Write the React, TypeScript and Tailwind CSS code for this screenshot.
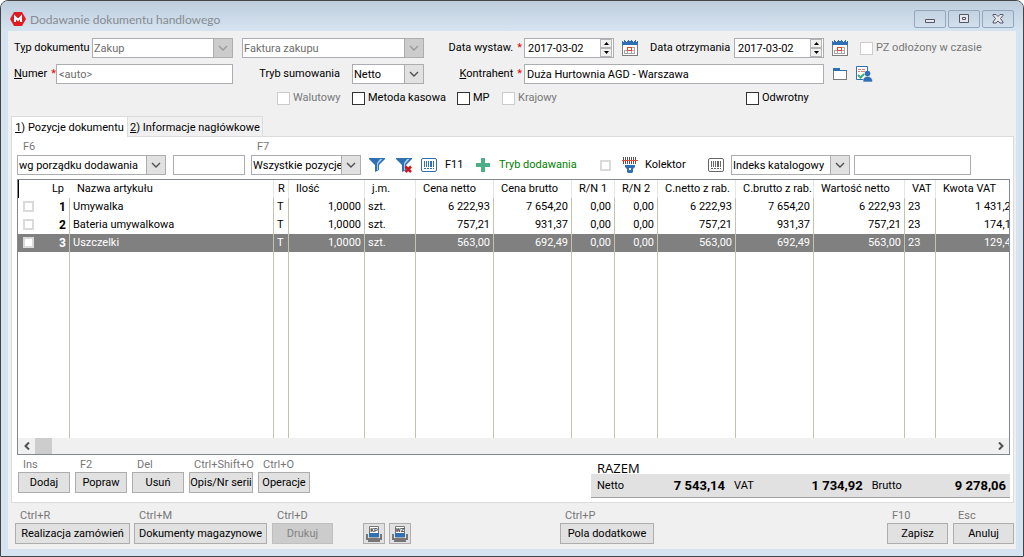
import type { ReactNode } from 'react';
import clsx from 'clsx';

const rows = [
  { lp: 1, name: 'Umywalka', net: '6 222,93', gross: '7 654,20', vat: '1 431,27' },
  { lp: 2, name: 'Bateria umywalkowa', net: '757,21', gross: '931,37', vat: '174,16' },
  { lp: 3, name: 'Uszczelki', net: '563,00', gross: '692,49', vat: '129,49', selected: true },
];

const headers = [
  'Nazwa artykułu',
  'R',
  'Ilość',
  'j.m.',
  'Cena netto',
  'Cena brutto',
  'R/N 1',
  'R/N 2',
  'C.netto z rab.',
  'C.brutto z rab.',
  'Wartość netto',
  'VAT',
  'Kwota VAT',
];

function Star() {
  return <span className="pl-1 text-[#e00000]">*</span>;
}

function Combo({
  label,
  value,
  className,
  disabled,
}: {
  label: string;
  value: string;
  className: string;
  disabled?: boolean;
}) {
  return (
    <div className={clsx('relative h-5 shrink-0', className)}>
      <select
        aria-label={label}
        disabled={disabled}
        className="block h-full w-full appearance-none border border-[#abadb3] bg-white pl-px pr-3 pt-0.5 text-black opacity-100 outline-none disabled:text-[#6d6d6d]"
      >
        <option>{value}</option>
      </select>
      <span
        className={clsx(
          'pointer-events-none absolute inset-y-0 right-0 flex w-5 items-center justify-center border border-[#adadad]',
          disabled ? 'bg-[#cccccc] text-[#9a9a9a]' : 'bg-[#e1e1e1] text-[#505050]',
        )}
      >
        <svg width="10" height="6" viewBox="0 0 10 6" fill="none" stroke="currentColor" strokeWidth="1.4">
          <path d="M1 1l4 4 4-4" />
        </svg>
      </span>
    </div>
  );
}

function TextBox({ label, value, className }: { label: string; value?: string; className: string }) {
  return (
    <input
      aria-label={label}
      defaultValue={value}
      className={clsx('h-5 shrink-0 border border-[#abadb3] bg-white px-0.5 outline-none', className)}
    />
  );
}

function DateBox({ id }: { id: string }) {
  return (
    <div className="flex h-5 w-[90px] shrink-0 border border-[#abadb3] bg-white">
      <input id={id} defaultValue="2017-03-02" className="min-w-0 flex-1 pl-[3px] pt-0.5 outline-none" />
      <div className="mr-px flex w-3 flex-col">
        {['M0 3h5L2.5 0z', 'M0 0h5L2.5 3z'].map((d, i) => (
          <button
            key={d}
            aria-label={i ? 'Dzień wstecz' : 'Dzień naprzód'}
            className="flex flex-1 items-center justify-center border border-[#b4b4b4] bg-[#f0f0f0]"
          >
            <svg width="5" height="3" viewBox="0 0 5 3">
              <path d={d} />
            </svg>
          </button>
        ))}
      </div>
    </div>
  );
}

function Check({ children, disabled, className }: { children: ReactNode; disabled?: boolean; className?: string }) {
  return (
    <label className={clsx('flex shrink-0 items-center gap-[3px]', disabled && 'text-[#777777]', className)}>
      <input
        type="checkbox"
        disabled={disabled}
        className="size-[13px] appearance-none border border-[#333333] bg-white disabled:border-[#cccccc]"
      />
      <span>{children}</span>
    </label>
  );
}

function KeyButton({
  hint,
  children,
  className,
  disabled,
}: {
  hint: string;
  children: ReactNode;
  className: string;
  disabled?: boolean;
}) {
  return (
    <div className={clsx('shrink-0', className)}>
      <div className="h-4 whitespace-nowrap pl-[5px] pt-px text-[#777777]">{hint}</div>
      <button
        disabled={disabled}
        className="h-[21px] w-full whitespace-nowrap border border-[#adadad] bg-[#e1e1e1] disabled:border-[#bfbfbf] disabled:bg-[#cccccc] disabled:text-[#838383]"
      >
        {children}
      </button>
    </div>
  );
}

function CalendarIcon() {
  return (
    <svg width="16" height="16" viewBox="0 0 16 16" shapeRendering="crispEdges">
      <path fill="#fff" d="M0 5h16v11H0z" />
      <path fill="#2f6fb3" d="M0 1h16v4H0zM2 0h1v1H2zM6 0h1v1H6zM9 0h1v1H9zM13 0h1v1h-1z" />
      <path fill="#f0f0f0" d="M1 1h1v1H1zM4 1h1v1H4zM11 1h1v1h-1zM14 1h1v1h-1z" />
      <path fill="none" stroke="#7d7d7d" d="M.5 5v10.500h15V5" />
      <path fill="none" stroke="#a8a8a8" d="M9.500 7.500h3v6h-10v-3h10M5.500 11v2M9.500 11v2" />
      <path fill="none" stroke="#d9492c" d="M5.500 7.500h4v3h-4z" />
    </svg>
  );
}

function FolderIcon() {
  return (
    <svg width="15" height="14" viewBox="0 0 15 14" shapeRendering="crispEdges">
      <path fill="#2f6fb3" d="M0 1h7v2h7v2H0z" />
      <path fill="#fff" stroke="#777" d="M.5 4v8.500h13V4" />
      <path fill="#2f6fb3" d="M0 3h14v1H0z" />
    </svg>
  );
}

function ContractorIcon() {
  return (
    <svg width="17" height="16" viewBox="0 0 17 16">
      <path fill="#fff" stroke="#2f6fb3" d="M.5.5h11v13H.5z" />
      <path stroke="#e08070" d="M2 3.500h3M6 3.500h3M2 5.500h2M5 5.500h4" />
      <path stroke="#3fa77c" strokeWidth="2" fill="none" d="M2 9l2.500 2.500L8 8" />
      <circle cx="11.500" cy="7.500" r="2.800" fill="#2f6fb3" />
      <path fill="#2f6fb3" stroke="#f0f0f0" strokeWidth=".6" d="M7 16c0-4 1.500-5.500 4.500-5.500S16.500 12 16.500 16z" />
    </svg>
  );
}

function FunnelIcon({ crossed }: { crossed?: boolean }) {
  return (
    <svg width="16" height="16" viewBox="0 0 16 16">
      <path fill="#2f6fb3" d="M0 1h16v1l-6 6v5l-4 2V8L0 2z" />
      <path fill="#a8cbe8" d="M11 2h2.500L9 7v6H8V6z" />
      {crossed && <path stroke="#d0141c" strokeWidth="2.500" d="M9.500 9.500l5.500 5.500M15 9.500L9.500 15" />}
    </svg>
  );
}

function BarcodeIcon({ color }: { color: string }) {
  return (
    <svg width="16" height="14" viewBox="0 0 16 14" fill="none" stroke={color}>
      <rect x=".5" y=".5" width="15" height="13" rx="1.500" fill="#fff" />
      <path shapeRendering="crispEdges" d="M3.500 3v6M5.500 3v6M7.500 3v6M9.500 3v6M10.500 3v6M12.500 3v6" />
      <path shapeRendering="crispEdges" strokeDasharray="2 1" d="M3 10.500h10" />
    </svg>
  );
}

function CollectorIcon() {
  return (
    <svg width="16" height="16" viewBox="0 0 16 16">
      <path
        stroke="#555"
        shapeRendering="crispEdges"
        d="M1.500 0v7M3.500 0v7M5.500 0v7M7.500 0v7M9.500 0v7M11.500 0v7M13.500 0v7"
      />
      <path fill="#e04a2f" d="M0 3h16v1H0z" />
      <path fill="#2f6fb3" d="M3 8h10v2l-2 2v3l-1 1H6l-1-1v-3L3 10z" />
      <path fill="#fff" d="M7 11h2v2H7z" />
    </svg>
  );
}

function TrayIcon({ text }: { text: string }) {
  return (
    <svg width="16" height="16" viewBox="0 0 16 16">
      <path fill="#777" d="M0 8h2v4h12V8h2v6h-2v2H2v-2H0z" />
      <path fill="#fff" stroke="#777" d="M3.500.5h9V11h-9z" />
      <path fill="#2f6fb3" d="M3 7h10v4H3z" />
      <text x="8" y="6" textAnchor="middle" fontSize="6" fontWeight="700" fill="#444">
        {text}
      </text>
    </svg>
  );
}

function Caption({ label, children }: { label: string; children: ReactNode }) {
  return (
    <button
      aria-label={label}
      className="flex h-[18px] w-8 items-center justify-center rounded-[2px] border border-[#93a6bd] bg-gradient-to-b from-[#c3d2e1] to-[#d3e0ed]"
    >
      <svg width="12" height="10" viewBox="0 0 12 10" fill="#e8e8ec" stroke="#55566a">
        {children}
      </svg>
    </button>
  );
}

function TitleBar() {
  return (
    <header className="flex h-[30px] shrink-0 items-start bg-gradient-to-b from-[#becddc] to-[#d6e4f2] px-[9px] pt-[9px]">
      <svg width="16" height="16" viewBox="0 0 16 16" className="mt-px">
        <path fill="#e01b24" d="M4 1h8l4 7-4 7H4L0 8z" />
        <path fill="none" stroke="#fff" strokeWidth="2" d="M5 11V6l3 3 3-3v5" />
      </svg>
      <h1 className="flex-1 pl-1 font-['Lato','Open_Sans',sans-serif] text-[12px] leading-5 text-[#868b91]">
        Dodawanie dokumentu handlowego
      </h1>
      <div className="flex gap-0.5">
        <Caption label="Minimalizuj">
          <path d="M1.500 5.500h9v3h-9z" />
        </Caption>
        <Caption label="Maksymalizuj">
          <path d="M1.500.5h9v8h-9zM4.500 3.500h3v2h-3z" />
        </Caption>
        <Caption label="Zamknij">
          <path d="M1 .5h3l2 2 2-2h3v1L8.500 4.500 11 8v1H8L6 7 4 9H1V8l2.500-3.500L1 1.500z" />
        </Caption>
      </div>
    </header>
  );
}

function DocumentForm() {
  return (
    <section className="flex flex-col gap-1.5 pl-1.5 pt-[7px]">
      <div className="flex h-5 items-center">
        <span className="w-[78px] shrink-0">
          T<u>y</u>p dokumentu
        </span>
        <Combo label="Typ dokumentu" value="Zakup" className="w-[141px]" disabled />
        <Combo label="Rodzaj dokumentu" value="Faktura zakupu" className="ml-[9px] w-[182px]" disabled />
        <label htmlFor="issued" className="w-[100px] shrink-0 pr-0.5 text-right">
          Data wystaw.
          <Star />
        </label>
        <DateBox id="issued" />
        <button aria-label="Kalendarz" className="ml-2">
          <CalendarIcon />
        </button>
        <label htmlFor="received" className="w-24 shrink-0 pl-3">
          Data otrzymania
        </label>
        <DateBox id="received" />
        <button aria-label="Kalendarz" className="ml-2">
          <CalendarIcon />
        </button>
        <Check disabled className="ml-3">
          PZ odłożony w czasie
        </Check>
      </div>
      <div className="flex h-5 items-center">
        <span className="w-[42px] shrink-0">
          <u>N</u>umer
          <Star />
        </span>
        <TextBox label="Numer" value="<auto>" className="w-[177px] text-[#6d6d6d]" />
        <span className="w-[119px] shrink-0 pr-3 text-right">Tryb sumowania</span>
        <Combo label="Tryb sumowania" value="Netto" className="w-[72px]" />
        <span className="w-[100px] shrink-0 pr-0.5 text-right">
          <u>K</u>ontrahent
          <Star />
        </span>
        <TextBox label="Kontrahent" value="Duża Hurtownia AGD - Warszawa" className="w-[300px]" />
        <button aria-label="Wybierz kontrahenta" className="ml-[9px]">
          <FolderIcon />
        </button>
        <button aria-label="Karta kontrahenta" className="ml-2">
          <ContractorIcon />
        </button>
      </div>
      <div className="flex h-4 items-center pl-[263px]">
        <Check disabled className="w-[75px]">
          Walutowy
        </Check>
        <Check className="w-[105px]">Metoda kasowa</Check>
        <Check className="w-[45px]">MP</Check>
        <Check disabled className="w-[244px]">
          Krajowy
        </Check>
        <Check>Odwrotny</Check>
      </div>
    </section>
  );
}

function Toolbar() {
  return (
    <div>
      <div className="flex h-4 pl-1.5 text-[#777777]">
        <span className="w-[234px]">F6</span>
        <span>F7</span>
      </div>
      <div className="flex h-5 items-center">
        <Combo label="Sortowanie" value="wg porządku dodawania" className="w-[149px]" />
        <TextBox label="Szukaj" className="ml-[7px] w-[72px]" />
        <Combo label="Filtr pozycji" value="Wszystkie pozycje" className="ml-1.5 w-[110px]" />
        <button aria-label="Filtruj" className="ml-2">
          <FunnelIcon />
        </button>
        <button aria-label="Usuń filtr" className="ml-[11px]">
          <FunnelIcon crossed />
        </button>
        <button className="ml-[9px] flex w-[54px] shrink-0 items-center gap-2">
          <BarcodeIcon color="#2f6fb3" />
          F11
        </button>
        <button className="flex w-[125px] shrink-0 items-center gap-2 text-[#008000]">
          <svg width="16" height="14" viewBox="0 0 16 14">
            <path fill="#4caf87" d="M6 0h4v5h5v4h-5v5H6V9H1V5h5z" />
          </svg>
          Tryb dodawania
        </button>
        <label className="flex w-[108px] shrink-0 items-center">
          <input type="checkbox" className="size-[11px] appearance-none border-2 border-[#dadada] bg-white" />
          <span className="ml-[11px] flex items-center gap-[7px]">
            <CollectorIcon />
            Kolektor
          </span>
        </label>
        <BarcodeIcon color="#666666" />
        <Combo label="Indeks" value="Indeks katalogowy" className="ml-[7px] w-[119px]" />
        <TextBox label="Wartość indeksu" className="ml-1 w-[117px]" />
      </div>
    </div>
  );
}

function ItemsTable() {
  const cell = 'border-r border-[#c3c3b0] px-[3px]';
  const num = cell + ' text-right';
  return (
    <div className="mt-1 flex min-h-0 flex-1 flex-col border border-[#828790]">
      <div className="min-h-0 flex-1 overflow-hidden">
        <table className="h-full w-full min-w-[1003px] table-fixed border-separate border-spacing-0 whitespace-nowrap">
          <colgroup>
            <col className="w-5" />
            <col className="w-8" />
            <col />
            <col className="w-[15px]" />
            <col className="w-[76px]" />
            <col className="w-[51px]" />
            <col className="w-[78px]" />
            <col className="w-[78px]" />
            <col className="w-[43px]" />
            <col className="w-[43px]" />
            <col className="w-[78px]" />
            <col className="w-[78px]" />
            <col className="w-[91px]" />
            <col className="w-[31px]" />
            <col className="w-[85px]" />
          </colgroup>
          <thead>
            <tr className="h-[18px] text-left">
              <th className="border-l border-black p-0" />
              <th className="p-0 pr-1.5 text-right font-normal">Lp</th>
              {headers.map((h) => (
                <th
                  key={h}
                  className={clsx('border-r border-[#e5e5e5] p-0 font-normal', h === 'R' ? 'pl-1' : 'pl-[7px]')}
                >
                  {h}
                </th>
              ))}
            </tr>
          </thead>
          <tbody>
            {rows.map((r) => (
              <tr key={r.lp} className={clsx('h-[18px]', r.selected && 'bg-[#808080] text-white')}>
                <td className="p-0 pb-px pl-[5px]">
                  <input
                    type="checkbox"
                    aria-label={r.name}
                    className="block size-[11px] appearance-none border-2 border-[#dadada] bg-white"
                  />
                </td>
                <td className={clsx(num, 'text-[12px] font-bold')}>{r.lp}</td>
                <td className={cell}>{r.name}</td>
                <td className={cell}>T</td>
                <td className={num}>1,0000</td>
                <td className={cell}>szt.</td>
                <td className={num}>{r.net}</td>
                <td className={num}>{r.gross}</td>
                <td className={num}>0,00</td>
                <td className={num}>0,00</td>
                <td className={num}>{r.net}</td>
                <td className={num}>{r.gross}</td>
                <td className={num}>{r.net}</td>
                <td className={cell}>23</td>
                <td className={num}>{r.vat}</td>
              </tr>
            ))}
            <tr>
              <td />
              {Array.from({ length: 14 }, (_, i) => (
                <td key={i} className={cell} />
              ))}
            </tr>
          </tbody>
        </table>
      </div>
      <div className="flex h-4 shrink-0 items-center bg-[#f0f0f0] text-[#505050]">
        <button aria-label="Przewiń w lewo" className="flex w-[17px] justify-center">
          <svg width="6" height="8" viewBox="0 0 6 8" fill="none" stroke="currentColor" strokeWidth="2">
            <path d="M5 .5L1.500 4 5 7.500" />
          </svg>
        </button>
        <div className="h-full flex-1">
          <div className="h-full w-[17px] bg-[#cdcdcd]" />
        </div>
        <button aria-label="Przewiń w prawo" className="flex w-[17px] justify-center">
          <svg width="6" height="8" viewBox="0 0 6 8" fill="none" stroke="currentColor" strokeWidth="2">
            <path d="M1 .5L4.500 4 1 7.500" />
          </svg>
        </button>
      </div>
    </div>
  );
}

function Totals() {
  return (
    <div className="ml-auto w-[419px]">
      <div className="h-[18px] pl-1.5 pt-[3px] font-['Open_Sans','Noto_Sans',sans-serif] text-[13px] font-medium leading-[18px]">
        RAZEM
      </div>
      <div className="flex h-6 items-center border-b border-[#a0a0a0] bg-[#e1e1e1] pl-1.5 pr-1">
        <span>Netto</span>
        <b className="w-[101px] text-right text-[13px]">7 543,14</b>
        <span className="ml-[9px]">VAT</span>
        <b className="w-[109px] text-right text-[13px]">1 734,92</b>
        <span className="ml-[9px]">Brutto</span>
        <b className="flex-1 text-right text-[13px]">9 278,06</b>
      </div>
    </div>
  );
}

export default function App() {
  return (
    <main className="flex h-screen min-h-[420px] flex-col overflow-hidden rounded-t-lg border border-[#454545] bg-[#d6e4f2] font-['Roboto','Liberation_Sans',sans-serif] text-[11px] leading-4 text-black">
      <TitleBar />
      <div className="mx-[7px] mb-[7px] flex min-h-0 flex-1 flex-col bg-[#f0f0f0]">
        <DocumentForm />

        {/* zakładki */}
        <div role="tablist" className="mt-2.5 flex h-5 shrink-0 items-end pl-[3px]">
          <button
            role="tab"
            aria-selected="true"
            className="relative -mb-px h-[21px] w-[117px] border border-b-0 border-[#dcdcdc] bg-white pt-0.5"
          >
            <u>1</u>) Pozycje dokumentu
          </button>
          <button
            role="tab"
            aria-selected="false"
            className="h-5 w-[135px] border border-b-0 border-l-0 border-[#dcdcdc] pt-0.5"
          >
            <u>2</u>) Informacje nagłówkowe
          </button>
        </div>

        <section className="ml-[3px] mr-0.5 flex min-h-0 flex-1 flex-col border border-[#dcdcdc] bg-white pb-1 pl-[5px] pr-[3px] pt-0.5">
          <Toolbar />
          <ItemsTable />
          <div className="flex h-[43px] shrink-0 gap-[5px] pl-px pt-px">
            <KeyButton hint="Ins" className="w-[52px]">
              Dodaj
            </KeyButton>
            <KeyButton hint="F2" className="w-[52px]">
              Popraw
            </KeyButton>
            <KeyButton hint="Del" className="w-[52px]">
              Usuń
            </KeyButton>
            <KeyButton hint="Ctrl+Shift+O" className="w-16">
              Opis/Nr serii
            </KeyButton>
            <KeyButton hint="Ctrl+O" className="w-[52px]">
              Operacje
            </KeyButton>
            <Totals />
          </div>
        </section>

        <footer className="flex shrink-0 items-end pb-[5px] pl-[7px] pr-0.5 pt-1">
          <KeyButton hint="Ctrl+R" className="w-[115px]">
            Realizacja zamówień
          </KeyButton>
          <KeyButton hint="Ctrl+M" className="ml-1 w-[133px]">
            Dokumenty magazynowe
          </KeyButton>
          <KeyButton hint="Ctrl+D" className="ml-[5px] w-[61px]" disabled>
            Drukuj
          </KeyButton>
          <div className="ml-[30px] flex gap-1">
            {['KP', 'WZ'].map((t) => (
              <button
                key={t}
                className="flex h-[21px] w-[22px] items-center justify-center border border-[#adadad] bg-[#e1e1e1]"
              >
                <TrayIcon text={t} />
              </button>
            ))}
          </div>
          <KeyButton hint="Ctrl+P" className="ml-[149px] w-[94px]">
            Pola dodatkowe
          </KeyButton>
          <KeyButton hint="F10" className="ml-auto w-[61px]">
            Zapisz
          </KeyButton>
          <KeyButton hint="Esc" className="ml-[5px] w-[61px]">
            Anuluj
          </KeyButton>
        </footer>
      </div>
    </main>
  );
}
